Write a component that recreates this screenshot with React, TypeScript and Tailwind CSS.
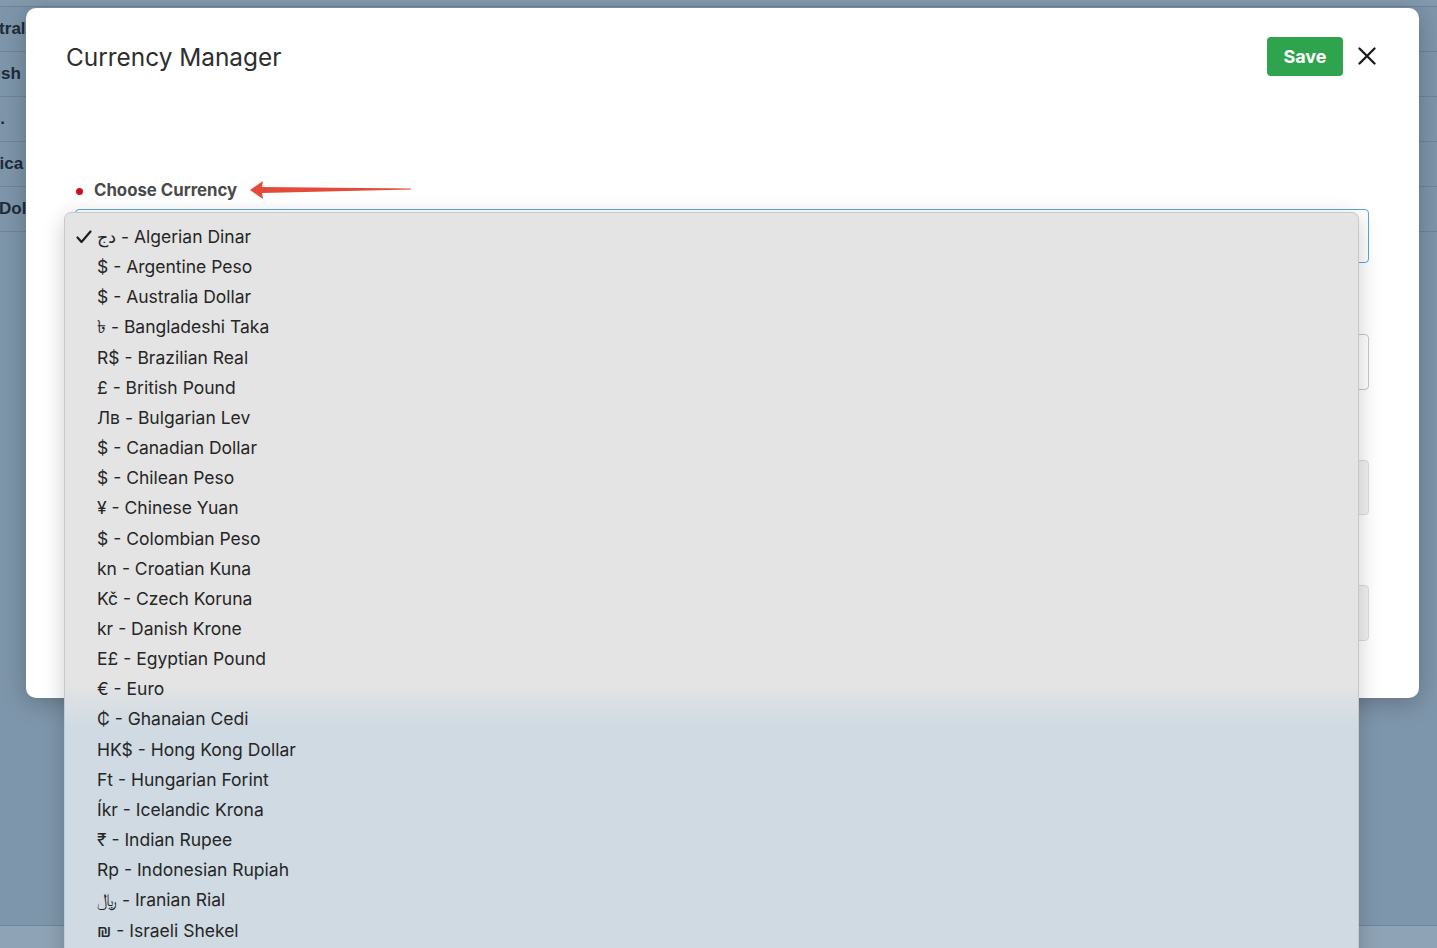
import React from "react";

const currencies: [string, string][] = [
  ["دج", "Algerian Dinar"],
  ["$", "Argentine Peso"],
  ["$", "Australia Dollar"],
  ["৳", "Bangladeshi Taka"],
  ["R$", "Brazilian Real"],
  ["£", "British Pound"],
  ["Лв", "Bulgarian Lev"],
  ["$", "Canadian Dollar"],
  ["$", "Chilean Peso"],
  ["¥", "Chinese Yuan"],
  ["$", "Colombian Peso"],
  ["kn", "Croatian Kuna"],
  ["Kč", "Czech Koruna"],
  ["kr", "Danish Krone"],
  ["E£", "Egyptian Pound"],
  ["€", "Euro"],
  ["₵", "Ghanaian Cedi"],
  ["HK$", "Hong Kong Dollar"],
  ["Ft", "Hungarian Forint"],
  ["Íkr", "Icelandic Krona"],
  ["₹", "Indian Rupee"],
  ["Rp", "Indonesian Rupiah"],
  ["﷼", "Iranian Rial"],
  ["₪", "Israeli Shekel"],
  ["¥", "Japanese Yen"],
  ["KSh", "Kenyan Shilling"],
];

const bgRows = [
  { text: "Central", ml: "-ml-[33px]" },
  { text: "British I", ml: "-ml-[33px]" },
  { text: "U.S.", ml: "-ml-[28px]" },
  { text: "America", ml: "-ml-[44px]" },
  { text: "Dollar", ml: "-ml-[1px]" },
];

export default function App() {
  return (
    <div className="relative h-[948px] w-full overflow-hidden bg-[#7e96ab] font-['Inter','DejaVu_Sans',sans-serif]">
      {/* background page */}
      <div className="flex h-full flex-col">
        <div className="h-[7px] border-b border-[#6d8397] bg-[#839aae]" />
        {bgRows.map((r, i) => (
          <div
            key={i}
            className="flex h-[45px] items-center border-b border-[#6f869a] font-['Liberation_Sans',sans-serif] text-[17px] font-bold text-[#1d2b3a]"
          >
            <span className={`whitespace-nowrap ${r.ml}`}>{r.text}</span>
          </div>
        ))}
        <div className="flex-1 border-b border-[#6f869a]" />
        <div className="h-[22px] bg-[#8ea3b5]" />
      </div>

      {/* modal */}
      <div className="absolute left-[26px] top-[8px] flex h-[690px] w-[1393px] flex-col rounded-[10px] bg-white shadow-[0_4px_24px_rgba(0,0,0,0.25)]">
        <div className="flex items-start justify-between pl-[40px] pr-[43px] pt-[29px]">
          <h1 className="mt-[4px] text-[24.4px] leading-[32px] text-[#2e2e2e]">Currency Manager</h1>
          <div className="flex items-start gap-[15px]">
            <button className="flex h-[39px] w-[76px] items-center justify-center rounded-[4px] bg-[#2ea44f] text-[18px] font-bold text-white">
              Save
            </button>
            <svg width="18" height="18" viewBox="0 0 18 18" className="mt-[10px]">
              <path d="M1.5 1.5 L16.5 16.5 M16.5 1.5 L1.5 16.5" stroke="#1a1a1a" strokeWidth="2.3" strokeLinecap="round" />
            </svg>
          </div>
        </div>

        <div className="flex flex-col pl-[49px] pr-[50px] pt-[105px]">
          <div className="flex h-[20px] items-center">
            <span className="ml-[1px] h-[7px] w-[7px] rounded-full bg-[#d0101b]" />
            <span className="ml-[11px] text-[16.8px] font-bold text-[#4a4a4a]">Choose Currency</span>
          </div>
          <div className="mt-[8px] h-[54px] rounded-[4px] border border-[#5aa6da] bg-white" />
          <div className="mt-[71px] h-[56px] rounded-[4px] border border-[#c7c7c7] bg-white" />
          <div className="mt-[70px] h-[55px] rounded-[4px] border border-[#dcdcdc] bg-[#f1f1f1]" />
          <div className="mt-[70px] h-[56px] rounded-[4px] border border-[#dcdcdc] bg-[#f1f1f1]" />
        </div>
      </div>

      {/* red annotation arrow */}
      <svg className="absolute left-[248px] top-[179px]" width="166" height="22" viewBox="248 179 166 22">
        <polygon points="250,190 263,181 262,187 411,188.6 411,189.6 262,193 263,199" fill="#e34a39" />
      </svg>

      {/* native select dropdown */}
      <div className="absolute left-[64px] top-[212px] h-[760px] w-[1295px] rounded-t-[7px] border border-[#c8c8c8] bg-[linear-gradient(180deg,#e4e4e4_470px,#cfdae3_515px)] pt-[9px] shadow-[0_6px_22px_rgba(0,0,0,0.2)]">
        {currencies.map(([sym, name], i) => (
          <div key={i} className="relative flex h-[30.17px] items-center pl-[32px] text-[17.5px] text-[#262626]">
            {i === 0 && (
              <svg className="absolute left-[11px] top-[8px]" width="16" height="14" viewBox="0 0 16 14">
                <path d="M1.5 7.5 L5.5 12 L14.5 1.5" fill="none" stroke="#1f1f1f" strokeWidth="2.2" strokeLinecap="round" strokeLinejoin="round" />
              </svg>
            )}
            <span className="whitespace-nowrap">
              <span>{sym}</span>
              <span> - {name}</span>
            </span>
          </div>
        ))}
      </div>
    </div>
  );
}
